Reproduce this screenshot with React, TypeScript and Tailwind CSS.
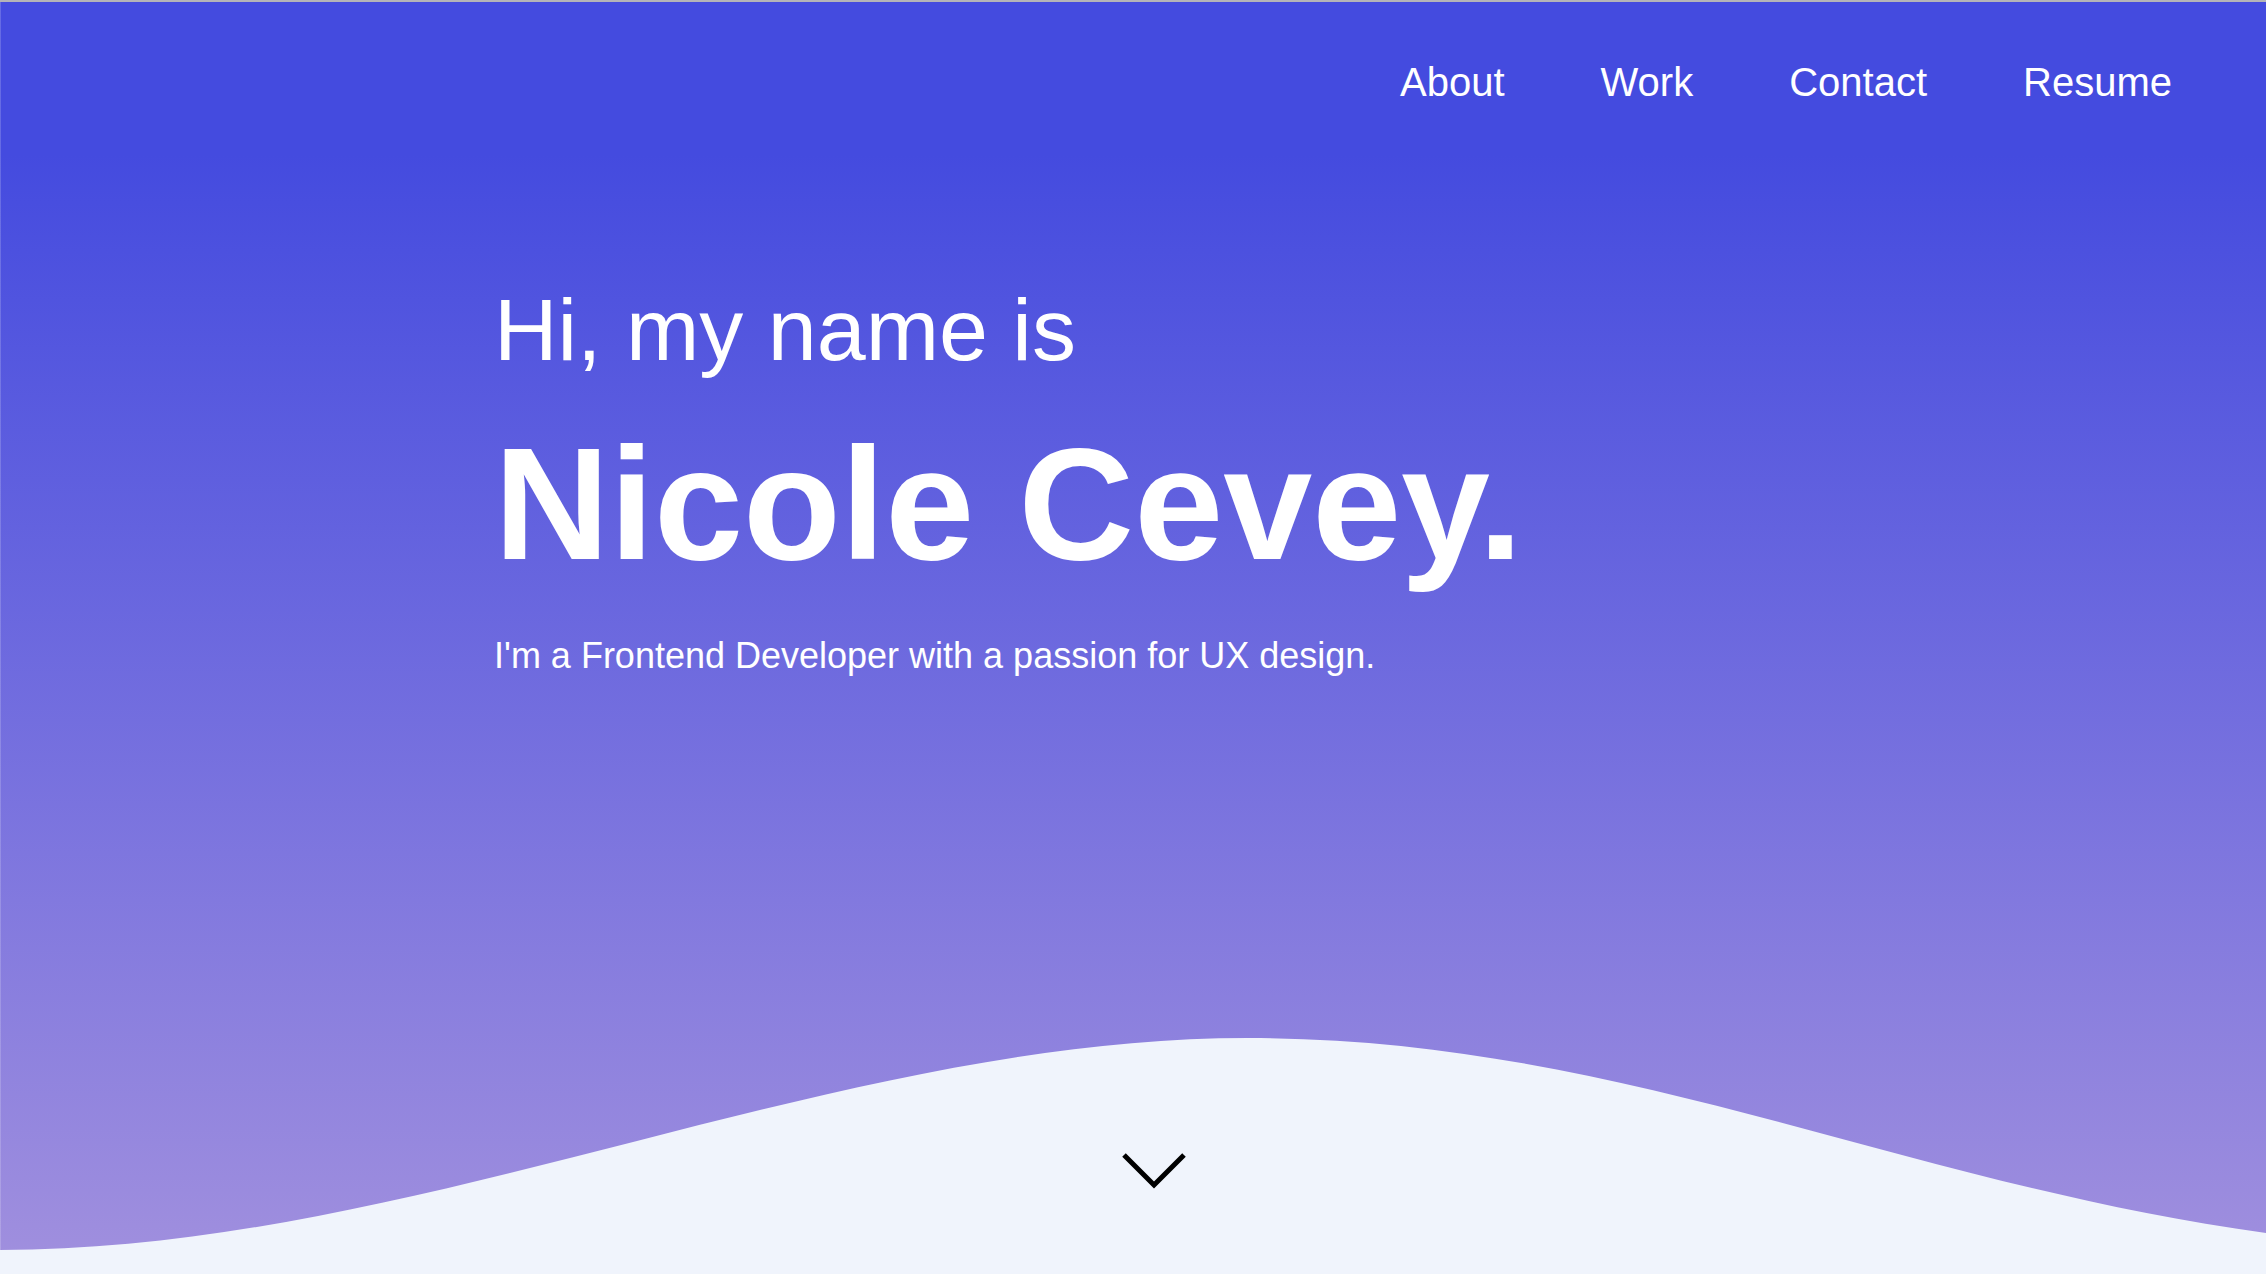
const links = ["About", "Work", "Contact", "Resume"];

export default function App() {
  return (
    <div className="flex min-h-screen flex-col border-t-2 border-[#b4b4b8] bg-[linear-gradient(to_right,#ffffff2e_1px,transparent_1px),linear-gradient(to_bottom,#444bdf_0%,#444bdf_12%,#a190de_100%)] font-['Liberation_Sans',Arial,sans-serif] text-white">
      <header className="flex justify-end px-[94px] pt-14">
        <nav className="flex gap-24 text-[40px] leading-[48px]">
          {links.map((label) => (
            <a key={label} href={`#${label.toLowerCase()}`}>
              {label}
            </a>
          ))}
        </nav>
      </header>
      <main className="px-[494px] pt-[174px]">
        <h1>
          <span className="block text-[88px] leading-[100px]">Hi, my name is</span>
          <span className="block pt-[34px] text-[160px] leading-[180px] font-bold">Nicole Cevey.</span>
        </h1>
        <p className="pt-[38px] text-[36px] leading-[48px]">
          I'm a Frontend Developer with a passion for UX design.
        </p>
      </main>
      <div className="mt-auto grid">
        <svg
          viewBox="0 0 2266 236"
          preserveAspectRatio="none"
          className="col-start-1 row-start-1 h-[236px] w-full"
          aria-hidden="true"
        >
          <path
            d="M0 212 C420 212 830 0 1248 0 C1620 0 1900 145 2266 195 V236 H0Z"
            fill="#f0f4fc"
          />
        </svg>
        <a
          href="#about"
          aria-label="Scroll to about"
          className="col-start-1 row-start-1 mt-[114px] ml-[42px] self-start justify-self-center"
        >
          <svg width="64" height="38" viewBox="0 0 64 38" fill="none" stroke="#000" strokeWidth="5">
            <path d="M2 3 L32 33 L62 3" />
          </svg>
        </a>
      </div>
    </div>
  );
}
